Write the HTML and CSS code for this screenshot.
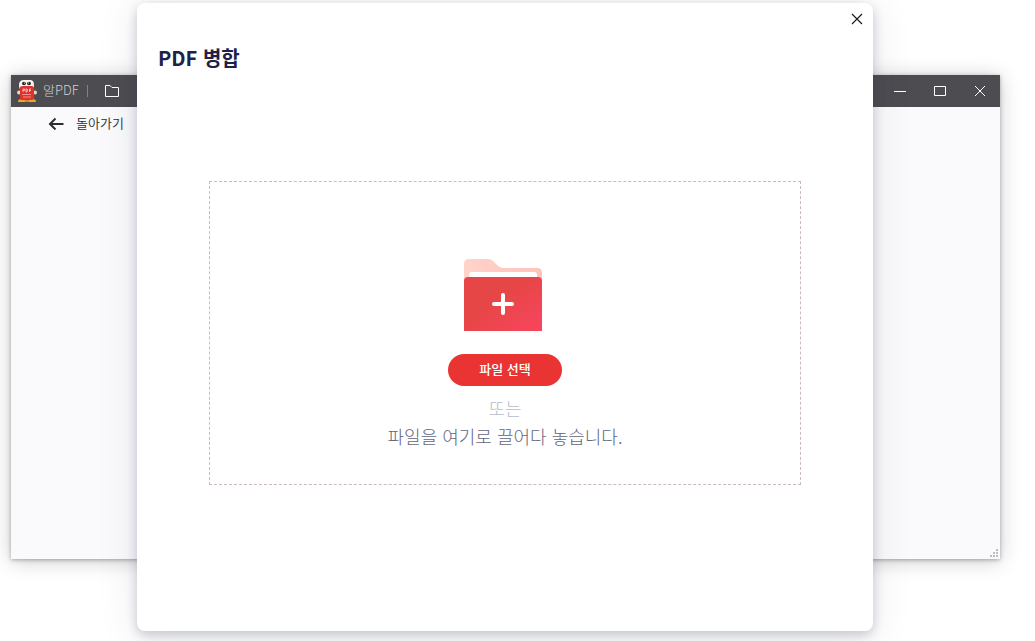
FILE: index.html
```html
<!DOCTYPE html>
<html lang="ko">
<head>
    <meta charset="UTF-8">
    <meta name="viewport" content="width=device-width, initial-scale=1.0">
    <title>알PDF</title>
    <link rel="stylesheet" href="styles.css">
</head>
<body>
    <div class="app-window">
        <header class="title-bar">
            <svg class="app-logo" width="20" height="22" viewBox="0 0 20 22">
                <path d="M1 22q0-3 3-3h4v3zM19 22q0-3-3-3h-4v3z" fill="#efa81c"/>
                <path d="M8 20h4v2H8z" fill="#c98a1a"/>
                <path d="M2 5q0-5 5-5h6q4 0 4 5v4H3q-1-1-1-4z" fill="#f8f5f2"/>
                <ellipse cx="7" cy="3.500" rx="2" ry="1.800" fill="#222"/>
                <ellipse cx="12" cy="3.500" rx="2" ry="1.800" fill="#222"/>
                <circle cx="7.500" cy="3" r="0.600" fill="#fff"/>
                <circle cx="11.500" cy="3" r="0.600" fill="#fff"/>
                <circle cx="2" cy="12.500" r="2" fill="#f1d3b6"/>
                <circle cx="18" cy="12.500" r="2" fill="#f1d3b6"/>
                <path d="M3 7q1-1 4-1h8q2 0 2 2v11q-1 1-3 1H5q-2 0-2-1z" fill="#e03030"/>
                <path d="M6 12V9h1.500v1.500H6M9 9v3h1q1.200-1.500 0-3zM12.500 12V9H14M12.500 10.500H14" fill="none" stroke="#ffd9d2" stroke-width="0.800"/>
                <path d="M5 14.500h9M6 17h8" stroke="#f6aaa2" stroke-width="0.800"/>
            </svg>
            <span class="app-name">알PDF</span>
            <span class="divider"></span>
            <button class="bar-button" aria-label="열기">
                <svg width="16" height="14" viewBox="0 0 16 14"><path d="M1.500 12.500v-11h4.500l2 2h6.500v9z" fill="none" stroke="#fff" stroke-linejoin="round"/></svg>
            </button>
            <div class="window-buttons">
                <button class="bar-button" aria-label="최소화">
                    <svg width="12" height="12" viewBox="0 0 12 12"><path d="M0 6.500h12" stroke="#fff"/></svg>
                </button>
                <button class="bar-button" aria-label="최대화">
                    <svg width="12" height="12" viewBox="0 0 12 12"><path d="M0.500 1.500h11v9h-11z" fill="none" stroke="#fff"/></svg>
                </button>
                <button class="bar-button" aria-label="닫기">
                    <svg width="12" height="12" viewBox="0 0 12 12"><path d="M1 1l10 10M11 1L1 11" stroke="#fff"/></svg>
                </button>
            </div>
        </header>
        <main class="window-body">
            <a class="back-link" href="#">
                <svg width="16" height="14" viewBox="0 0 16 14"><path d="M15.500 8H2M7.500 2.500L2 8l5.500 5.500" fill="none" stroke="#2c2d33" stroke-width="2"/></svg>
                돌아가기
            </a>
            <svg class="grip" width="8" height="8" viewBox="0 0 8 8" fill="#bdbdbf">
                <path d="M6 0h2v2H6zM3 3h2v2H3zM6 3h2v2H6zM0 6h2v2H0zM3 6h2v2H3zM6 6h2v2H6z"/>
            </svg>
        </main>
    </div>

    <section class="dialog" role="dialog" aria-labelledby="dialog-title">
        <button class="close-button" aria-label="닫기">
            <svg width="12" height="12" viewBox="0 0 12 12"><path d="M1 1l10 10M11 1L1 11" stroke="#1c1c1c" stroke-width="1.200"/></svg>
        </button>
        <h1 id="dialog-title">PDF 병합</h1>
        <div class="drop-zone">
            <svg class="folder" width="82" height="72" viewBox="0 0 82 72">
                <defs>
                    <linearGradient id="front" x1="0" y1="0" x2="1" y2="1">
                        <stop offset="0.400" stop-color="#e64646"/>
                        <stop offset="1" stop-color="#f9455f"/>
                    </linearGradient>
                    <linearGradient id="back" x1="0" y1="0" x2="1" y2="0">
                        <stop offset="0" stop-color="#ffd3cb"/>
                        <stop offset="1" stop-color="#fdc3ba"/>
                    </linearGradient>
                </defs>
                <path d="M0 30V5q0-5 5-5h19q3 0 5 2l4 4q3 3 6 3h34q5 0 5 5v16z" fill="url(#back)"/>
                <path d="M5 22v-6q0-3 3-3h62q3 0 3 3v6z" fill="#fff"/>
                <path d="M0 72V22q0-4 4-4h70q4 0 4 4v50z" fill="url(#front)"/>
                <path d="M39 36v18M30 45h18" stroke="#fff" stroke-width="4" stroke-linecap="round"/>
            </svg>
            <button class="select-button">파일 선택</button>
            <p class="or-text">또는</p>
            <p class="drop-text">파일을 여기로 끌어다 놓습니다.</p>
        </div>
    </section>
</body>
</html>
```
FILE: styles.css
```css
* {
    box-sizing: border-box;
}

body {
    margin: 0;
    padding: 75px 35px 0 11px;
    min-height: 100vh;
    position: relative;
    overflow: hidden;
    background-color: #ffffff;
    font-family: "Noto Sans CJK KR", sans-serif;
    font-size: 13px;
}

button {
    padding: 0;
    border: none;
    background: none;
    font-family: inherit;
    cursor: pointer;
}

svg {
    display: block;
}

.app-window {
    height: calc(100vh - 157px);
    display: flex;
    flex-direction: column;
    box-shadow: 0 1px 4px rgba(0, 0, 0, 0.3), 0 2px 20px rgba(0, 0, 0, 0.2);
}

.title-bar {
    height: 32px;
    padding-left: 6px;
    display: flex;
    align-items: center;
    background-color: #4d4c51;
}

.app-name {
    margin-left: 6px;
    line-height: 20px;
    padding-bottom: 2px;
    color: #d0d0d4;
    font-weight: 300;
}

.divider {
    width: 1px;
    height: 12px;
    margin: 0 16px 0 8px;
    background-color: #828287;
}

.window-buttons {
    margin-left: auto;
    padding-right: 14px;
    display: flex;
    gap: 28px;
}

.window-body {
    flex: 1;
    padding: 6px 2px 2px 37px;
    display: flex;
    flex-direction: column;
    align-items: flex-start;
    justify-content: space-between;
    background-color: #fafafc;
}

.back-link {
    display: flex;
    align-items: center;
    gap: 12px;
    line-height: 20px;
    font-weight: 350;
    color: #2c2d33;
    text-decoration: none;
}

.grip {
    align-self: flex-end;
}

.dialog {
    position: absolute;
    top: 3px;
    right: 162px;
    bottom: 10px;
    left: 137px;
    padding: 0 72px;
    background-color: #ffffff;
    border-radius: 8px;
    box-shadow: 0 4px 12px rgba(40, 45, 80, 0.24), 0 4px 40px rgba(40, 45, 80, 0.1);
}

.close-button {
    position: absolute;
    top: 10px;
    right: 10px;
}

.dialog h1 {
    margin: 40px 0 108px -51px;
    font-size: 20px;
    line-height: 30px;
    font-weight: bold;
    color: #1e2149;
}

.drop-zone {
    height: 304px;
    padding-top: 77px;
    display: flex;
    flex-direction: column;
    align-items: center;
    border: 1px dashed #cbbaba;
}

.select-button {
    width: 114px;
    height: 32px;
    margin: 23px 0 8px;
    padding-bottom: 3px;
    border-radius: 16px;
    background-color: #ea3434;
    color: #ffffff;
    font-size: 13px;
    font-weight: 500;
}

.or-text,
.drop-text {
    margin: 0;
    font-size: 18px;
    line-height: 28px;
    font-weight: 300;
    color: #62657c;
}

.or-text {
    color: #b9bbca;
}
```
